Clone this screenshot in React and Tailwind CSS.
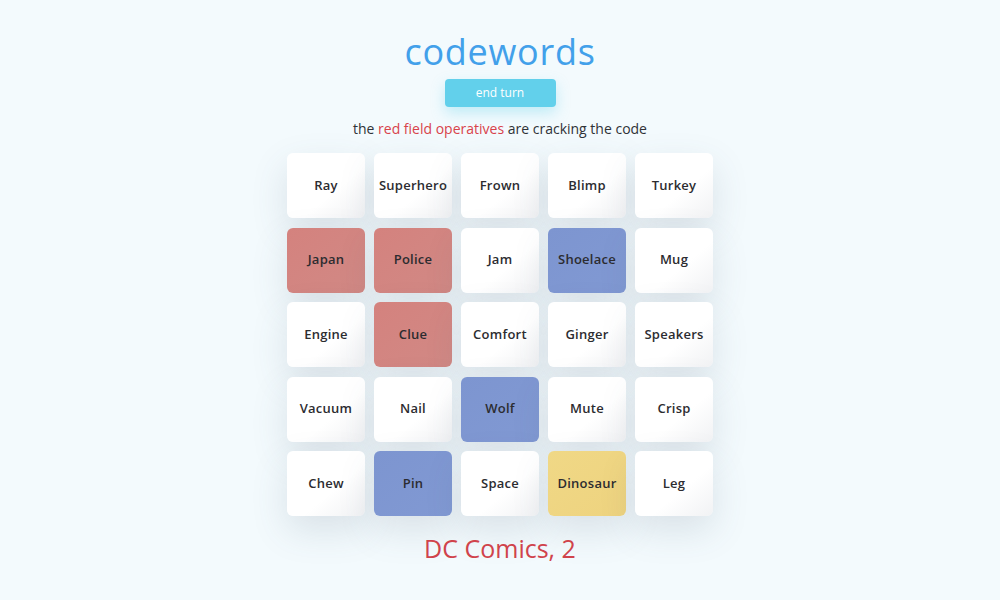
import React from 'react';

const words = [
    ['Ray', 'n'], ['Superhero', 'n'], ['Frown', 'n'], ['Blimp', 'n'], ['Turkey', 'n'],
    ['Japan', 'r'], ['Police', 'r'], ['Jam', 'n'], ['Shoelace', 'b'], ['Mug', 'n'],
    ['Engine', 'n'], ['Clue', 'r'], ['Comfort', 'n'], ['Ginger', 'n'], ['Speakers', 'n'],
    ['Vacuum', 'n'], ['Nail', 'n'], ['Wolf', 'b'], ['Mute', 'n'], ['Crisp', 'n'],
    ['Chew', 'n'], ['Pin', 'b'], ['Space', 'n'], ['Dinosaur', 'y'], ['Leg', 'n'],
];

const cardColors = {
    n: 'bg-gradient-to-br from-white from-60% to-[#f1f2f4]',
    r: 'bg-gradient-to-br from-[#d4827e] to-[#d18985]',
    b: 'bg-gradient-to-br from-[#7d95d0] to-[#8199d3]',
    y: 'bg-gradient-to-br from-[#f0d886] to-[#eed37f]',
};

const Card = ({ word, kind }) => (
    <div className={`h-[65px] rounded-md flex items-center justify-center text-[13px] font-semibold text-[#2c2c30] tracking-[0.02em] shadow-[0_14px_36px_rgba(70,90,110,0.15)] ${cardColors[kind]}`}>
        {word}
    </div>
);

export default function App() {
    return (
        <div className="w-[1000px] h-[600px] bg-[#f3fafd] flex flex-col items-center font-['Open_Sans',sans-serif] overflow-hidden">
            <h1 className="mt-[28px] text-[36px] leading-[48px] text-[#42a0ea] tracking-[0.02em]">codewords</h1>

            <button className="mt-[3px] w-[111px] h-[28px] rounded bg-[#62d0eb] text-white text-[12px] shadow-[0_6px_14px_rgba(98,208,235,0.35)]">
                end turn
            </button>

            <p className="mt-[12px] text-[14px] text-[#2f3237] leading-[20px]">
                the <span className="text-[#d8434b]">red field operatives</span> are cracking the code
            </p>

            {/* board */}
            <div className="mt-[14px] grid grid-cols-[repeat(5,78px)] gap-x-[9px] gap-y-[9.5px]">
                {words.map(([w, k]) => <Card key={w} word={w} kind={k} />)}
            </div>

            <p className="mt-[16px] text-[25px] text-[#d0434b] leading-[32px]">DC Comics, 2</p>
        </div>
    );
}
